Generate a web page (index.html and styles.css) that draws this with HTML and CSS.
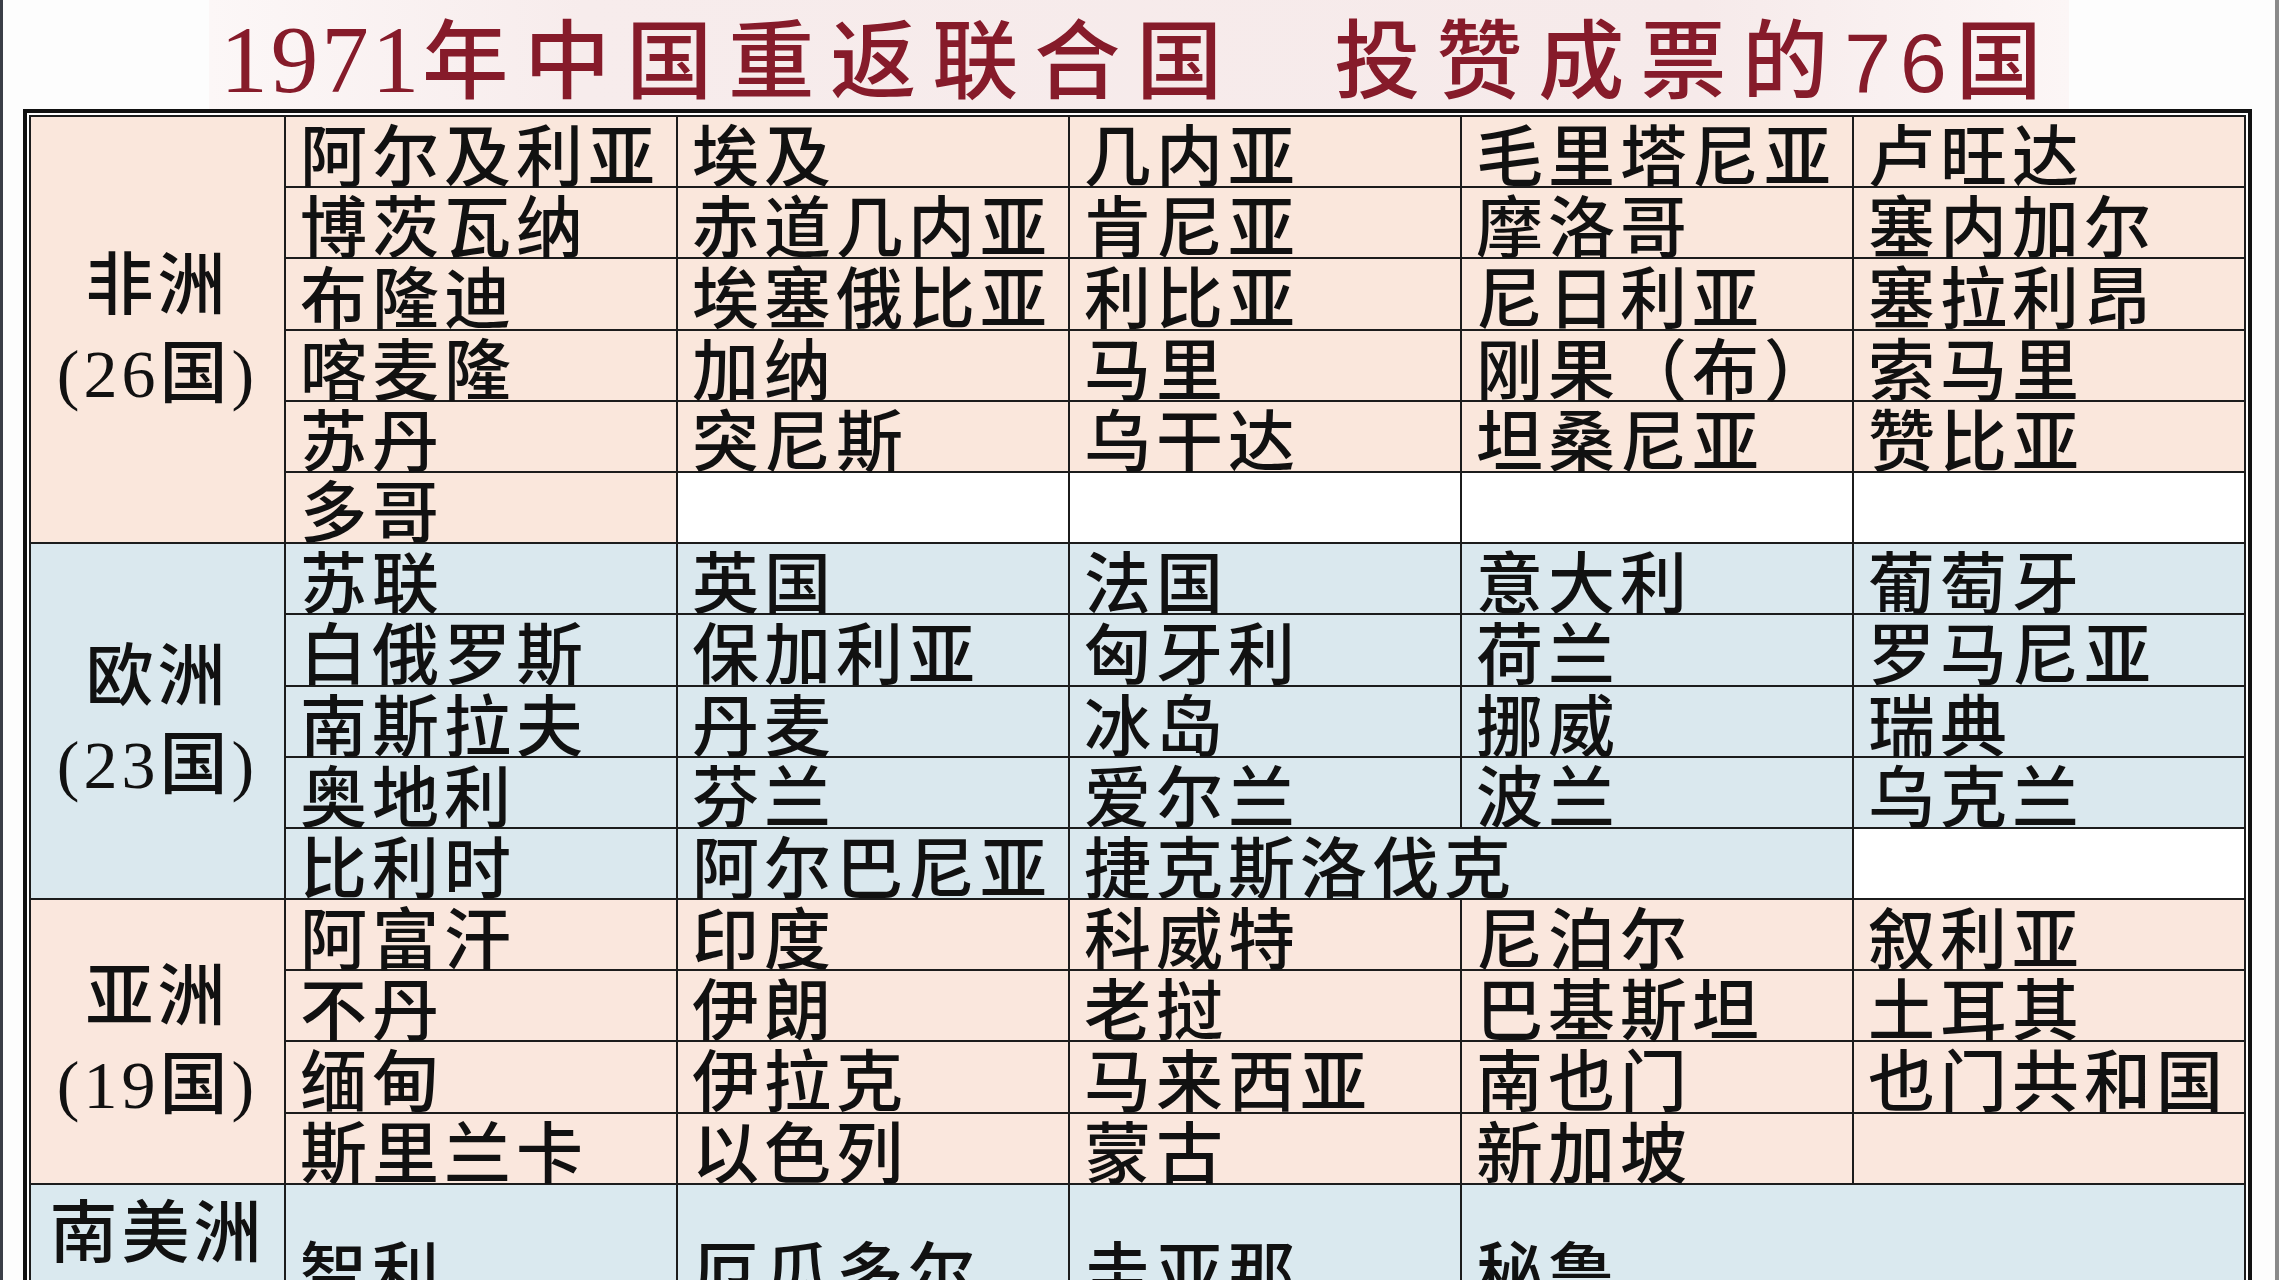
FILE: index.html
```html
<!DOCTYPE html>
<html lang="zh-CN">
<head>
<meta charset="utf-8">
<title>1971年中国重返联合国 投赞成票的76国</title>
<link rel="stylesheet" href="styles.css">
</head>
<body>
<div class="page">
  <h1 class="title"><span class="num">1971</span>年中国重返联合国<span class="gap"></span>投赞成票的<span class="num2">76</span>国</h1>
  <div class="frame">
    <div class="grid">
      <div class="cat af r-af"><span>非洲</span><span>(26国)</span></div>
      <div class="cell af">阿尔及利亚</div><div class="cell af">埃及</div><div class="cell af">几内亚</div><div class="cell af">毛里塔尼亚</div><div class="cell af">卢旺达</div>
      <div class="cell af">博茨瓦纳</div><div class="cell af">赤道几内亚</div><div class="cell af">肯尼亚</div><div class="cell af">摩洛哥</div><div class="cell af">塞内加尔</div>
      <div class="cell af">布隆迪</div><div class="cell af">埃塞俄比亚</div><div class="cell af">利比亚</div><div class="cell af">尼日利亚</div><div class="cell af">塞拉利昂</div>
      <div class="cell af">喀麦隆</div><div class="cell af">加纳</div><div class="cell af">马里</div><div class="cell af">刚果（布）</div><div class="cell af">索马里</div>
      <div class="cell af">苏丹</div><div class="cell af">突尼斯</div><div class="cell af">乌干达</div><div class="cell af">坦桑尼亚</div><div class="cell af">赞比亚</div>
      <div class="cell af">多哥</div><div class="cell empty"></div><div class="cell empty"></div><div class="cell empty"></div><div class="cell empty"></div>

      <div class="cat eu r-eu"><span>欧洲</span><span>(23国)</span></div>
      <div class="cell eu">苏联</div><div class="cell eu">英国</div><div class="cell eu">法国</div><div class="cell eu">意大利</div><div class="cell eu">葡萄牙</div>
      <div class="cell eu">白俄罗斯</div><div class="cell eu">保加利亚</div><div class="cell eu">匈牙利</div><div class="cell eu">荷兰</div><div class="cell eu">罗马尼亚</div>
      <div class="cell eu">南斯拉夫</div><div class="cell eu">丹麦</div><div class="cell eu">冰岛</div><div class="cell eu">挪威</div><div class="cell eu">瑞典</div>
      <div class="cell eu">奥地利</div><div class="cell eu">芬兰</div><div class="cell eu">爱尔兰</div><div class="cell eu">波兰</div><div class="cell eu">乌克兰</div>
      <div class="cell eu">比利时</div><div class="cell eu">阿尔巴尼亚</div><div class="cell eu span2">捷克斯洛伐克</div><div class="cell empty"></div>

      <div class="cat as r-as"><span>亚洲</span><span>(19国)</span></div>
      <div class="cell as">阿富汗</div><div class="cell as">印度</div><div class="cell as">科威特</div><div class="cell as">尼泊尔</div><div class="cell as">叙利亚</div>
      <div class="cell as">不丹</div><div class="cell as">伊朗</div><div class="cell as">老挝</div><div class="cell as">巴基斯坦</div><div class="cell as">土耳其</div>
      <div class="cell as">缅甸</div><div class="cell as">伊拉克</div><div class="cell as">马来西亚</div><div class="cell as">南也门</div><div class="cell as">也门共和国</div>
      <div class="cell as">斯里兰卡</div><div class="cell as">以色列</div><div class="cell as">蒙古</div><div class="cell as">新加坡</div><div class="cell as"></div>

      <div class="cat sa r-sa"><span>南美洲</span><span>(4国)</span></div>
      <div class="cell sa mid">智利</div><div class="cell sa mid">厄瓜多尔</div><div class="cell sa mid">圭亚那</div><div class="cell sa mid span2">秘鲁</div>
    </div>
  </div>
</div>
</body>
</html>
```

FILE: styles.css
```css
html, body {
  margin: 0;
  padding: 0;
  overflow: hidden;
  background: #fdfdfd;
}

.page {
  width: 2279px;
  height: 1280px;
  box-sizing: border-box;
  border-left: 3px solid #3a3e47;
  border-right: 4px solid #8a8a8a;
  background: #fdfdfd;
  overflow: hidden;
}

.title {
  margin: 0 auto;
  width: 1860px;
  height: 109px;
  text-align: center;
  white-space: nowrap;
  font-family: "Noto Sans CJK SC", sans-serif;
  font-weight: 500;
  font-size: 86px;
  line-height: 109px;
  letter-spacing: 16px;
  color: #861b2a;
  background: linear-gradient(90deg, #fcf7f7 0%, #f7ecec 20%, #f6eaea 80%, #fcf6f6 100%);
}

.title .num {
  font-family: "Liberation Serif", serif;
  font-weight: 400;
  font-size: 95px;
  letter-spacing: 3px;
  line-height: 95px;
}

.title .num2 {
  font-family: "Liberation Sans", sans-serif;
  font-weight: 400;
  font-size: 84px;
  letter-spacing: 9px;
  line-height: 84px;
}

.title .gap {
  display: inline-block;
  width: 96px;
}

.frame {
  margin-left: 20px;
  width: 2229px;
  box-sizing: border-box;
  border: 4px solid #111;
  padding: 2px;
  background: #fff;
}

.grid {
  display: grid;
  grid-template-columns: 253px repeat(5, 1fr);
  grid-template-rows: repeat(15, 69.2px) 186px;
  gap: 2px;
  border: 2px solid #1c1c1c;
  background: #1c1c1c;
}

.cell {
  font-family: "Noto Sans CJK SC", sans-serif;
  font-weight: 500;
  font-size: 67px;
  line-height: 66px;
  letter-spacing: 5px;
  color: #111;
  padding: 2px 0 0 14px;
  white-space: nowrap;
}

.cell.mid {
  display: flex;
  align-items: center;
  padding-top: 0;
  padding-bottom: 18px;
}

.cat {
  grid-column: 1;
  display: flex;
  flex-direction: column;
  justify-content: center;
  align-items: center;
  font-family: "Liberation Serif", "Noto Sans CJK SC", serif;
  font-weight: 500;
  font-size: 68px;
  line-height: 88px;
  letter-spacing: 4px;
  color: #111;
  white-space: nowrap;
}

.r-af { grid-row: 1 / span 6; }
.r-eu { grid-row: 7 / span 5; }
.r-as { grid-row: 12 / span 4; }
.r-sa { grid-row: 16 / span 1; }

.span2 { grid-column: span 2; }

.af { background: #fae7dc; }
.eu { background: #dae8ee; }
.as { background: #fae7dd; }
.sa { background: #dae9ef; }
.empty { background: #ffffff; }
```
